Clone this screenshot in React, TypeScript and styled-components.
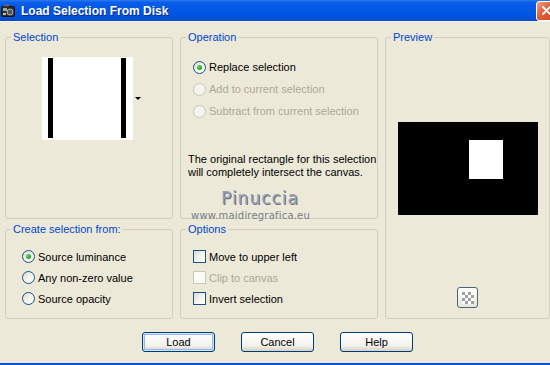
import styled, { createGlobalStyle } from "styled-components";

const GlobalStyle = createGlobalStyle`
  html, body {
    margin: 0;
    padding: 0;
  }
  body {
    background: #ece9d8;
    font-family: "Liberation Sans", Arial, sans-serif;
    font-size: 11px;
    color: #000;
  }
`;

const Window = styled.div`
  width: 550px;
  height: 365px;
  display: flex;
  flex-direction: column;
  background: #ece9d8;
  border-bottom: 2px solid #0c4fdc;
  box-sizing: border-box;
  overflow: hidden;
`;

const TitleBar = styled.div`
  height: 22px;
  flex: none;
  display: flex;
  align-items: center;
  gap: 5px;
  padding-left: 1px;
  background: linear-gradient(
    to bottom,
    #2a78f0 0%,
    #0a5ee8 12%,
    #0058e6 50%,
    #0053dc 85%,
    #0a48c8 100%
  );
  border-bottom: 1px solid #f4f2e8;
  box-sizing: border-box;
  overflow: hidden;
`;

const TitleText = styled.span`
  flex: 1;
  color: #fff;
  font-weight: bold;
  font-size: 12px;
  text-shadow: 1px 1px 0 #0a2a8a;
`;

const CloseButton = styled.div`
  width: 21px;
  height: 20px;
  margin-right: -7px;
  border: 1px solid #fff;
  border-radius: 3px;
  box-sizing: border-box;
  background: linear-gradient(135deg, #f0a48a 0%, #e2623f 40%, #c8451f 100%);
  display: flex;
  align-items: center;
  justify-content: center;
`;

const Body = styled.div`
  flex: 1;
  padding: 9px 0 0 5px;
  display: flex;
  flex-direction: column;
`;

const Grid = styled.div`
  display: grid;
  grid-template-columns: 168px 198px 165px;
  grid-template-rows: 188px 96px;
  column-gap: 7px;
  row-gap: 4px;
`;

const Group = styled.fieldset<{ $tall?: boolean }>`
  margin: 0;
  padding: 0;
  min-width: 0;
  border: 1px solid #d0d0bf;
  border-radius: 3px;
  box-sizing: border-box;
  grid-row: ${(p) => (p.$tall ? "span 2" : "auto")};
`;

const Legend = styled.legend`
  color: #0046d5;
  font-size: 11px;
  line-height: 13px;
  padding: 0 2px;
  margin-left: 5px;
`;

const SelectionBody = styled.div`
  display: flex;
  align-items: center;
  gap: 2px;
  padding: 13px 0 0 36px;
`;

const Thumbnail = styled.div`
  width: 91px;
  height: 83px;
  box-sizing: border-box;
  padding: 1px 7px 2px 6px;
  background: #fff;
  display: flex;
  justify-content: space-between;
`;

const Bar = styled.div`
  width: 5px;
  background: #000;
`;

const DropArrow = styled.div`
  width: 0;
  height: 0;
  border-left: 3px solid transparent;
  border-right: 3px solid transparent;
  border-top: 3px solid #000;
`;

const OperationBody = styled.div`
  position: relative;
  padding: 12px 0 0 7px;
`;

const OptionList = styled.div<{ $indent: number; $row: number }>`
  display: flex;
  flex-direction: column;
  padding-left: ${(p) => p.$indent}px;

  & > * {
    height: ${(p) => p.$row}px;
  }
`;

const Option = styled.label<{ $disabled?: boolean }>`
  display: flex;
  align-items: center;
  gap: 3px;
  color: ${(p) => (p.$disabled ? "#aca899" : "#000")};
`;

const Radio = styled.span<{ $checked?: boolean; $disabled?: boolean }>`
  width: 13px;
  height: 13px;
  box-sizing: border-box;
  border-radius: 50%;
  border: 1px solid ${(p) => (p.$disabled ? "#cac8bb" : "#1c5180")};
  background: ${(p) =>
    p.$disabled
      ? "#f4f3ee"
      : "linear-gradient(135deg, #dcd9cb 0%, #f4f3ee 50%, #ffffff 100%)"};
  display: flex;
  align-items: center;
  justify-content: center;

  &::after {
    content: "";
    display: ${(p) => (p.$checked ? "block" : "none")};
    width: 5px;
    height: 5px;
    border-radius: 50%;
    background: radial-gradient(circle at 35% 35%, #64d264, #21a121 70%);
  }
`;

const Check = styled.span<{ $disabled?: boolean }>`
  width: 13px;
  height: 13px;
  box-sizing: border-box;
  border: 1px solid ${(p) => (p.$disabled ? "#cac8bb" : "#1c5180")};
  background: ${(p) =>
    p.$disabled
      ? "#fbfbf8"
      : "linear-gradient(135deg, #dcdcd7 0%, #f5f5f1 60%, #ffffff 100%)"};
`;

const Note = styled.p`
  margin: 31px 0 0;
  line-height: 13px;
`;

const WatermarkName = styled.div`
  position: absolute;
  left: 40px;
  top: 144px;
  font-family: "DejaVu Sans", sans-serif;
  font-size: 17px;
  letter-spacing: 1px;
  color: #9aa0b4;
  text-shadow: 1px 1px 0 #6a6f82;
`;

const WatermarkUrl = styled.div`
  position: absolute;
  left: 10px;
  top: 166px;
  font-family: "DejaVu Sans", sans-serif;
  font-size: 10px;
  color: #7a7c88;
  letter-spacing: 0.2px;
`;

const PreviewBody = styled.div`
  display: flex;
  flex-direction: column;
  align-items: center;
  padding-top: 78px;
`;

const Canvas = styled.div`
  width: 140px;
  height: 93px;
  box-sizing: border-box;
  padding: 18px 0 0 71px;
  background: #000;
`;

const SelectedArea = styled.div`
  width: 34px;
  height: 39px;
  background: #fff;
`;

const ToolButton = styled.div`
  margin-top: 72px;
  width: 21px;
  height: 21px;
  box-sizing: border-box;
  border: 1px solid #4c6478;
  border-radius: 3px;
  background: linear-gradient(#ffffff, #e6e4dc);
  display: flex;
  align-items: center;
  justify-content: center;
`;

const CreateBody = styled.div`
  padding: 10px 0 0 10px;
`;

const OptionsBody = styled.div`
  padding: 10px 0 0 12px;
`;

const ButtonRow = styled.div`
  display: flex;
  gap: 26px;
  margin-top: 13px;
  padding-left: 137px;
`;

const Button = styled.button<{ $default?: boolean }>`
  width: 73px;
  height: 20px;
  padding: 0;
  font-family: "Liberation Sans", Arial, sans-serif;
  font-size: 11px;
  color: #000;
  border: 1px solid #003c74;
  border-radius: 3px;
  background: linear-gradient(#ffffff 0%, #f3f2ec 70%, #d6d0c5 100%);
  box-shadow: ${(p) =>
    p.$default ? "inset 0 0 0 1px #cee7ff, inset 0 0 0 2px #98b8ea" : "none"};
`;

const AppIcon = () => (
  <svg width="15" height="14" viewBox="0 0 15 14">
    <rect x="0.5" y="2.5" width="13" height="10" rx="1" fill="#2b2b2b" stroke="#111" />
    <rect x="2" y="4" width="4" height="3" fill="#9aa4b0" />
    <circle cx="9" cy="8" r="3" fill="#555" stroke="#ccc" strokeWidth="0.8" />
    <rect x="3" y="0.5" width="5" height="2" fill="#666" />
    <rect x="2" y="9" width="3" height="2" fill="#d0c080" />
  </svg>
);

const CloseGlyph = () => (
  <svg width="9" height="9" viewBox="0 0 9 9">
    <path d="M1 1 L8 8 M8 1 L1 8" stroke="#fff" strokeWidth="1.8" strokeLinecap="round" />
  </svg>
);

const CheckerIcon = () => {
  const cells = [];
  for (let r = 0; r < 4; r++) {
    for (let c = 0; c < 4; c++) {
      cells.push(
        <rect
          key={`${r}-${c}`}
          x={c * 3}
          y={r * 3}
          width="3"
          height="3"
          fill={(r + c) % 2 === 0 ? "#a0a0a0" : "#ffffff"}
        />
      );
    }
  }
  return (
    <svg width="12" height="12" viewBox="0 0 12 12">
      {cells}
    </svg>
  );
};

const App = () => {
  return (
    <>
      <GlobalStyle />
      <Window>
        <TitleBar>
          <AppIcon />
          <TitleText>Load Selection From Disk</TitleText>
          <CloseButton>
            <CloseGlyph />
          </CloseButton>
        </TitleBar>
        <Body>
          <Grid>
            <Group>
              <Legend>Selection</Legend>
              <SelectionBody>
                <Thumbnail>
                  <Bar />
                  <Bar />
                </Thumbnail>
                <DropArrow />
              </SelectionBody>
            </Group>

            <Group>
              <Legend>Operation</Legend>
              <OperationBody>
                <OptionList $indent={5} $row={22}>
                  <Option>
                    <Radio $checked />
                    Replace selection
                  </Option>
                  <Option $disabled>
                    <Radio $disabled />
                    Add to current selection
                  </Option>
                  <Option $disabled>
                    <Radio $disabled />
                    Subtract from current selection
                  </Option>
                </OptionList>
                <Note>
                  The original rectangle for this selection
                  <br />
                  will completely intersect the canvas.
                </Note>
                <WatermarkName>Pinuccia</WatermarkName>
                <WatermarkUrl>www.maidiregrafica.eu</WatermarkUrl>
              </OperationBody>
            </Group>

            <Group $tall>
              <Legend>Preview</Legend>
              <PreviewBody>
                <Canvas>
                  <SelectedArea />
                </Canvas>
                <ToolButton>
                  <CheckerIcon />
                </ToolButton>
              </PreviewBody>
            </Group>

            <Group>
              <Legend>Create selection from:</Legend>
              <CreateBody>
                <OptionList $indent={6} $row={21}>
                  <Option>
                    <Radio $checked />
                    Source luminance
                  </Option>
                  <Option>
                    <Radio />
                    Any non-zero value
                  </Option>
                  <Option>
                    <Radio />
                    Source opacity
                  </Option>
                </OptionList>
              </CreateBody>
            </Group>

            <Group>
              <Legend>Options</Legend>
              <OptionsBody>
                <OptionList $indent={0} $row={21}>
                  <Option>
                    <Check />
                    Move to upper left
                  </Option>
                  <Option $disabled>
                    <Check $disabled />
                    Clip to canvas
                  </Option>
                  <Option>
                    <Check />
                    Invert selection
                  </Option>
                </OptionList>
              </OptionsBody>
            </Group>
          </Grid>

          <ButtonRow>
            <Button $default>Load</Button>
            <Button>Cancel</Button>
            <Button>Help</Button>
          </ButtonRow>
        </Body>
      </Window>
    </>
  );
};

export default App;
